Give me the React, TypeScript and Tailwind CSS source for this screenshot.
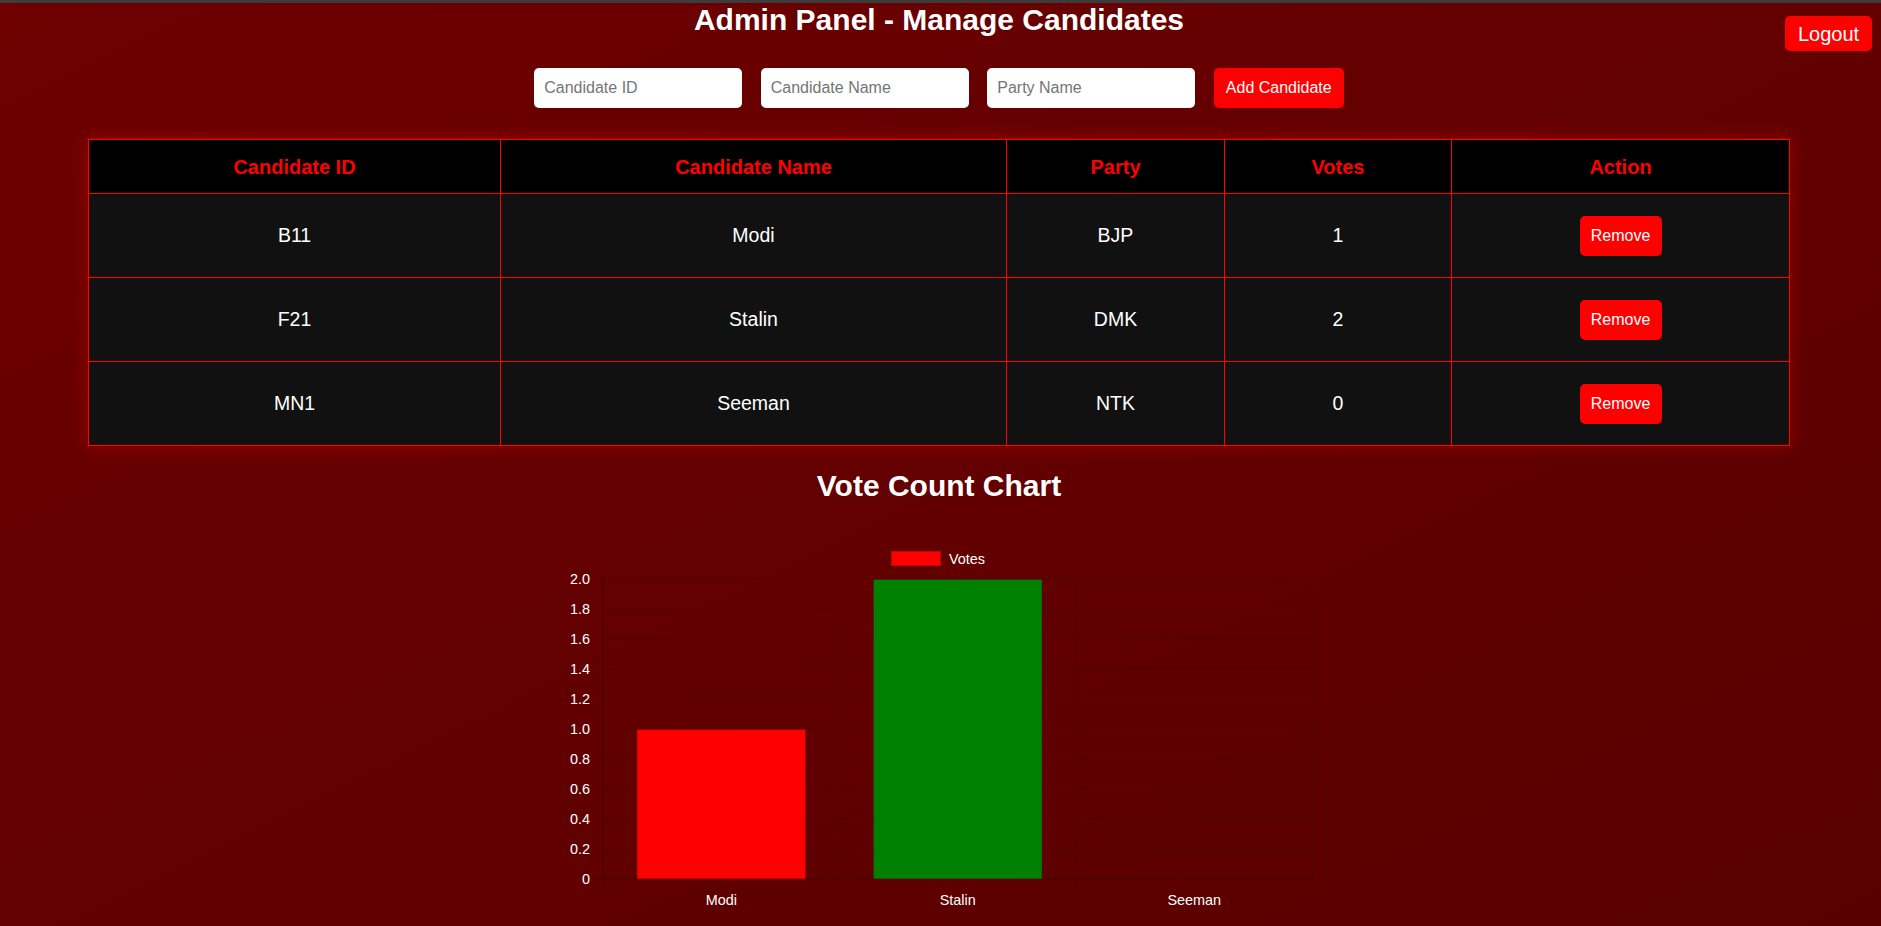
import { useState } from "react";

type Candidate = {
    id: string;
    name: string;
    party: string;
    votes: number;
};

const candidates: Candidate[] = [
    { id: "B11", name: "Modi", party: "BJP", votes: 1 },
    { id: "F21", name: "Stalin", party: "DMK", votes: 2 },
    { id: "MN1", name: "Seeman", party: "NTK", votes: 0 },
];

const barColors = ["#ff0000", "#008000", "#0000ff"];

// chart geometry (px inside the svg)
const plotLeft = 40;
const plotRight = 749.5;
const plotTop = 40.7;
const plotBottom = 340.7;
const maxValue = 2;

function VoteChart({ data }: { data: Candidate[] }) {
    const catWidth = (plotRight - plotLeft) / data.length;
    const yFor = (v: number) =>
        plotBottom - (v / maxValue) * (plotBottom - plotTop);
    const ticks = [2, 1.8, 1.6, 1.4, 1.2, 1, 0.8, 0.6, 0.4, 0.2, 0];

    return (
        <svg
            width={752}
            height={380}
            viewBox="0 0 752 380"
            className="mx-auto mt-[34px] block"
            fontFamily="'Liberation Sans', Arial, sans-serif"
        >
            {/* legend */}
            <rect
                x={328.5}
                y={13.5}
                width={49}
                height={14}
                fill="#ff0000"
                stroke="#c80000"
                strokeWidth={1}
            />
            <text x={386} y={25.5} fontSize={14.4} fill="#ffffff">
                Votes
            </text>

            {/* horizontal grid + y labels */}
            {ticks.map((t) => (
                <g key={t}>
                    <line
                        x1={32}
                        x2={plotRight}
                        y1={yFor(t)}
                        y2={yFor(t)}
                        stroke={t === 0 ? "rgba(0,0,0,0.25)" : "rgba(0,0,0,0.1)"}
                        strokeWidth={1}
                    />
                    <text
                        x={27}
                        y={yFor(t) + 5}
                        fontSize={14.4}
                        fill="#ffffff"
                        textAnchor="end"
                    >
                        {t === 0 ? "0" : t.toFixed(1)}
                    </text>
                </g>
            ))}

            {/* vertical grid */}
            {[0, 1, 2, 3].map((i) => (
                <line
                    key={i}
                    x1={plotLeft + i * catWidth}
                    x2={plotLeft + i * catWidth}
                    y1={plotTop}
                    y2={plotBottom + 10}
                    stroke={i === 0 ? "rgba(0,0,0,0.25)" : "rgba(0,0,0,0.1)"}
                    strokeWidth={1}
                />
            ))}

            {/* bars */}
            {data.map((c, i) => {
                const w = catWidth * 0.711;
                const x = plotLeft + i * catWidth + (catWidth - w) / 2;
                const top = yFor(c.votes);
                return c.votes > 0 ? (
                    <rect
                        key={c.id}
                        x={x}
                        y={top + 1}
                        width={w}
                        height={plotBottom - top - 1}
                        fill={barColors[i]}
                    />
                ) : null;
            })}

            {/* x labels */}
            {data.map((c, i) => (
                <text
                    key={c.id}
                    x={plotLeft + i * catWidth + catWidth / 2}
                    y={367}
                    fontSize={14.4}
                    fill="#ffffff"
                    textAnchor="middle"
                >
                    {c.name}
                </text>
            ))}
        </svg>
    );
}

export default function App() {
    const [id, setId] = useState("");
    const [name, setName] = useState("");
    const [party, setParty] = useState("");

    return (
        <div className="relative min-h-screen overflow-hidden bg-gradient-to-br from-[#6e0000] to-[#580000] font-['Liberation_Sans',Arial,sans-serif] text-white">
            <div className="h-[3px] bg-[#3c3c3c]" />

            <button className="absolute top-[16px] right-[9px] h-[35px] w-[87px] cursor-pointer rounded-[5px] bg-[#ff0000] text-[20px] text-white">
                Logout
            </button>

            <div className="pr-[3px]">
                <h1 className="text-center text-[30px] leading-[34.5px] font-bold">
                    Admin Panel - Manage Candidates
                </h1>

                <div className="mt-[30.5px] flex justify-center gap-[18.5px]">
                    <input
                        value={id}
                        onChange={(e) => setId(e.target.value)}
                        placeholder="Candidate ID"
                        className="h-[40px] w-[208px] rounded-[5px] bg-white px-[10px] text-[16px] text-black outline-none placeholder:text-[#757575]"
                    />
                    <input
                        value={name}
                        onChange={(e) => setName(e.target.value)}
                        placeholder="Candidate Name"
                        className="h-[40px] w-[208px] rounded-[5px] bg-white px-[10px] text-[16px] text-black outline-none placeholder:text-[#757575]"
                    />
                    <input
                        value={party}
                        onChange={(e) => setParty(e.target.value)}
                        placeholder="Party Name"
                        className="h-[40px] w-[208px] rounded-[5px] bg-white px-[10px] text-[16px] text-black outline-none placeholder:text-[#757575]"
                    />
                    <button className="h-[40px] w-[130px] cursor-pointer rounded-[5px] bg-[#ff0000] text-[16px] text-white">
                        Add Candidate
                    </button>
                </div>

                <table className="mx-auto mt-[31px] w-[1701px] table-fixed border-collapse border border-[#ff0000] shadow-[0_0_15px_rgba(255,0,0,0.35)]">
                    <colgroup>
                        <col className="w-[412px]" />
                        <col className="w-[506px]" />
                        <col className="w-[218px]" />
                        <col className="w-[227px]" />
                        <col className="w-[338px]" />
                    </colgroup>
                    <thead>
                        <tr className="h-[54px] bg-black text-[20px] font-bold text-[#ff0000]">
                            <th className="border border-[#ff0000]">Candidate ID</th>
                            <th className="border border-[#ff0000]">Candidate Name</th>
                            <th className="border border-[#ff0000]">Party</th>
                            <th className="border border-[#ff0000]">Votes</th>
                            <th className="border border-[#ff0000]">Action</th>
                        </tr>
                    </thead>
                    <tbody>
                        {candidates.map((c) => (
                            <tr
                                key={c.id}
                                className="h-[84px] bg-[#111111] text-center text-[19.5px]"
                            >
                                <td className="border border-[#ff0000]">{c.id}</td>
                                <td className="border border-[#ff0000]">{c.name}</td>
                                <td className="border border-[#ff0000]">{c.party}</td>
                                <td className="border border-[#ff0000]">{c.votes}</td>
                                <td className="border border-[#ff0000]">
                                    <button className="h-[40px] w-[82px] cursor-pointer rounded-[5px] bg-[#ff0000] text-[16px] text-white">
                                        Remove
                                    </button>
                                </td>
                            </tr>
                        ))}
                    </tbody>
                </table>

                <h2 className="mt-[23px] text-center text-[30px] leading-[34.5px] font-bold">
                    Vote Count Chart
                </h2>

                <VoteChart data={candidates} />
            </div>
        </div>
    );
}
